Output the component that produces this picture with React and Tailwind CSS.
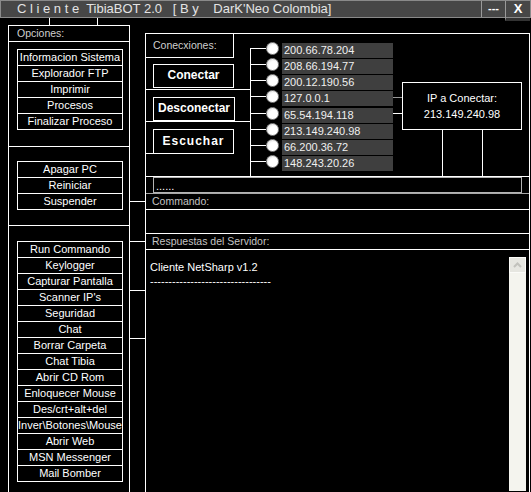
// TibiaBOT client window - wireframe style remote admin panel

const font = "font-['Liberation_Sans',Arial,sans-serif]";

const sistema = ['Informacion Sistema', 'Explorador FTP', 'Imprimir', 'Procesos', 'Finalizar Proceso'];
const energia = ['Apagar PC', 'Reiniciar', 'Suspender'];
const extras = [
  'Run Commando',
  'Keylogger',
  'Capturar Pantalla',
  "Scanner IP's",
  'Seguridad',
  'Chat',
  'Borrar Carpeta',
  'Chat Tibia',
  'Abrir CD Rom',
  'Enloquecer Mouse',
  'Des/crt+alt+del',
  'Inver\\Botones\\Mouse',
  'Abrir Web',
  'MSN Messenger',
  'Mail Bomber',
];
const ips = [
  '200.66.78.204',
  '208.66.194.77',
  '200.12.190.56',
  '127.0.0.1',
  '65.54.194.118',
  '213.149.240.98',
  '66.200.36.72',
  '148.243.20.26',
];

function ButtonList({ items }) {
  return (
    <div className="ml-[8px] w-[106px] border-x border-t border-white">
      {items.map((t) => (
        <div
          key={t}
          className="h-[16px] border-b border-white text-center text-[11px] leading-[15px] whitespace-nowrap overflow-hidden"
        >
          {t}
        </div>
      ))}
    </div>
  );
}

function Radio() {
  return (
    <div className="w-[13px] h-[13px] rounded-full border border-[#8c8c8c] bg-[radial-gradient(circle_at_60%_60%,#ffffff_45%,#cfcfcf_100%)]" />
  );
}

export default function App() {
  return (
    <div className={`w-[531px] h-[492px] bg-black text-white overflow-hidden flex flex-col ${font}`}>
      {/* title bar */}
      <div className="h-[18px] flex bg-[#474747] border border-[#8a8a8a] shrink-0">
        <div className="flex-1 pl-[16px] text-[13px] leading-[15px] text-[#e4e4e4] whitespace-pre">
          {"C l i e n t e  TibiaBOT 2.0   [ B y    DarK'Neo Colombia]"}
        </div>
        <div className="w-[24px] border-l border-[#9a9a9a] text-center text-[11px] font-bold leading-[15px]">---</div>
        <div className="w-[25px] border-l border-[#9a9a9a] text-center text-[13px] font-bold leading-[16px] border-b-[3px] border-b-[#333333] h-[20px]">
          X
        </div>
      </div>

      <div className="flex-1 flex pl-[8px]">
        {/* left options column */}
        <div className="w-[122px] flex flex-col">
          <div className="ml-[41px] w-[49px] h-[7px] border-x border-white" />
          <div className="flex-1 border-x border-t border-white flex flex-col">
            <div className="h-[16px] border-b border-white pl-[8px] text-[10.5px] leading-[15px] text-[#cfcfcf]">Opciones:</div>
            <div className="h-[105px] border-b border-white pt-[7px]">
              <ButtonList items={sistema} />
            </div>
            <div className="h-[79px] border-b border-white pt-[14px]">
              <ButtonList items={energia} />
            </div>
            <div className="pt-[15px]">
              <ButtonList items={extras} />
            </div>
          </div>
        </div>

        {/* connector gap */}
        <div className="w-[15px] flex flex-col">
          <div className="mt-[183px] h-px bg-white" />
          <div className="mt-[39px] h-px bg-white" />
          <div className="mt-[48px] h-px bg-white" />
          <div className="mt-[47px] h-px bg-white" />
        </div>

        {/* right panel */}
        <div className="w-[385px] mt-[15px] border-x border-t border-white flex flex-col">
          {/* connections */}
          <div className="h-[143px] border-b border-white flex">
            <div className="w-[104px] flex flex-col">
              <div className="w-[88px] h-[24px] border-r border-b border-white pl-[7px] text-[10.5px] leading-[22px] text-[#cfcfcf]">
                Conecxiones:
              </div>
              <div className="h-[32px] border-b border-white pt-[6px] pl-[7px]">
                <div className="w-[81px] h-[24px] border border-white text-center text-[12px] font-bold leading-[21px]">Conectar</div>
              </div>
              <div className="h-[32px] border-b border-white pt-[7px] pl-[7px]">
                <div className="w-[82px] h-[24px] border border-white text-center text-[12px] font-bold leading-[21px]">Desconectar</div>
              </div>
              <div className="flex-1 flex items-start">
                <div className="w-[7px] h-px mt-[31px] bg-white" />
                <div className="w-[81px] h-[25px] mt-[7px] border border-white text-center text-[12px] font-bold leading-[22px] tracking-[1px]">
                  Escuchar
                </div>
              </div>
            </div>

            <div className="flex-1 flex relative">
              <div className="absolute left-0 top-[15px] bottom-0 w-px bg-white" />
              <div className="pt-[8px] flex flex-col">
                {ips.map((ip) => (
                  <div key={ip} className="h-[16.25px] flex items-center">
                    <div className="flex items-center mb-[4px]">
                      <div className="w-[16px] h-px bg-white" />
                      <Radio />
                    </div>
                    <div className="ml-[3px] w-[111px] h-[15px] bg-[#3f3f3f] pl-[2px] text-[11px] leading-[15px] text-[#f0f0f0]">{ip}</div>
                  </div>
                ))}
              </div>
              <div className="flex-1 pt-[48px] flex flex-col">
                <div className="flex">
                  <div className="w-[9px] flex flex-col">
                    <div className="mt-[15px] h-px bg-[#9a9a9a]" />
                    <div className="mt-[15px] h-px bg-white" />
                  </div>
                  <div className="w-[120px] h-[48px] border border-white text-center text-[11px] leading-[16px] pt-[7px]">
                    <div>IP a Conectar:</div>
                    <div>213.149.240.98</div>
                  </div>
                </div>
                <div className="ml-[49px] w-[41px] flex-1 border-x border-white" />
              </div>
            </div>
          </div>

          {/* command input */}
          <div className="h-[17px] border-b border-[#a8a8a8] pl-[7px]">
            <div className="w-[369px] h-[16px] border border-[#b4b4b4] pl-[2px] text-[11px] leading-[16px]">......</div>
          </div>
          <div className="h-[16px] border-b border-white pl-[6px] text-[10.5px] leading-[15px] text-[#c4c4c4]">Commando:</div>
          <div className="h-[24px] border-b border-white" />
          <div className="h-[16px] border-b border-white pl-[6px] text-[10.5px] leading-[15px] text-[#c4c4c4]">Respuestas del Servidor:</div>

          {/* server output */}
          <div className="flex-1 flex">
            <div className="flex-1 pl-[4px] pt-[10px] text-[11px] leading-[14px]">
              <div>Cliente NetSharp v1.2</div>
              <div>---------------------------------</div>
            </div>
            <div className="w-[17px] mt-[7px] mb-[1px] mr-[3px] bg-[#f4f4ee] flex flex-col">
              <div className="h-[16px] bg-[#e6e6e0] border border-[#fbfbf8] flex items-center justify-center">
                <svg width="9" height="6" viewBox="0 0 9 6">
                  <path d="M1 5 L4.5 1.5 L8 5" fill="none" stroke="#c2c2bc" strokeWidth="2" />
                </svg>
              </div>
            </div>
          </div>
        </div>
      </div>
    </div>
  );
}
